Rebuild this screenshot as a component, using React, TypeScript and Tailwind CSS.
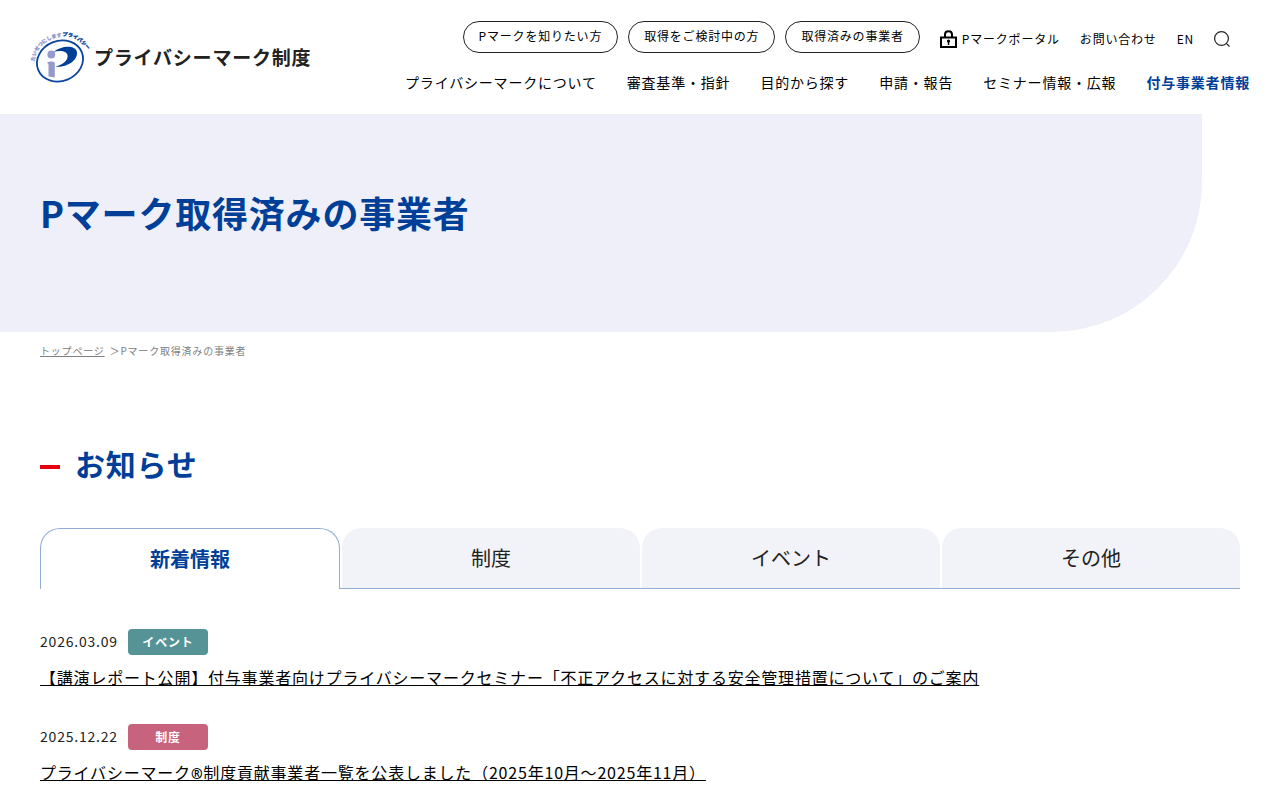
import { useState } from "react";

const audiences = ["Pマークを知りたい方", "取得をご検討中の方", "取得済みの事業者"];

const sections = [
  "プライバシーマークについて",
  "審査基準・指針",
  "目的から探す",
  "申請・報告",
  "セミナー情報・広報",
  "付与事業者情報",
];

const tabs = ["新着情報", "制度", "イベント", "その他"];

const news = [
  {
    date: "2026.03.09",
    category: "イベント",
    badge: "bg-[#569396]",
    title:
      "【講演レポート公開】付与事業者向けプライバシーマークセミナー「不正アクセスに対する安全管理措置について」のご案内",
  },
  {
    date: "2025.12.22",
    category: "制度",
    badge: "bg-[#c8637d]",
    title: (
      <>
        プライバシーマーク<span className="font-['Noto_Sans',sans-serif] text-sm font-bold">®</span>
        制度貢献事業者一覧を公表しました（2025年10月～2025年11月）
      </>
    ),
  },
];

function LogoMark() {
  return (
    <svg viewBox="0 0 60 54" className="h-[54px] w-[60px] shrink-0 overflow-visible tracking-normal" aria-hidden="true">
      <defs>
        <path id="arc-left" d="M4.500 31.500 C6 18 16 8 33 6.500" />
        <path id="arc-right" d="M32.500 6 C43 6 51 11 58.500 21" />
      </defs>
      <text fill="#8b93cb" fontSize="5" fontWeight="900" stroke="#8b93cb" strokeWidth="0.200">
        <textPath href="#arc-left">たいせつにします</textPath>
      </text>
      <text fill="#003f98" fontSize="5" fontWeight="900" stroke="#003f98" strokeWidth="0.300">
        <textPath href="#arc-right">プライバシー</textPath>
      </text>
      <ellipse cx="30" cy="31" rx="23.500" ry="20" transform="rotate(-22 30 31)" fill="none" stroke="#0b459f" strokeWidth="1.800" />
      <path
        d="M23.500 22 C31 15 46.500 14.500 47 22.500 C47.500 31.500 35 38 25.500 36.500 C33 35 38.500 30 37.500 25 C36.500 20.500 29 20 23.500 22Z"
        fill="#003f98"
      />
      <circle cx="21.300" cy="24.500" r="3.900" fill="#949acd" />
      <path d="M17 32.500 C19.500 31 23 31 24.800 32.500 V47.500 L18.500 46.500 V35 C18.500 34 18 33.500 17 32.500Z" fill="#949acd" />
    </svg>
  );
}

function LockIcon() {
  return (
    <svg viewBox="0 0 18 18" className="h-[18px] w-[18px]" fill="none" stroke="#000" aria-hidden="true">
      <rect x="1" y="7.500" width="15" height="9.500" strokeWidth="2" />
      <path d="M5 7.500 V4.500 C5 0 12 0 12 4.500 V7.500" strokeWidth="2" />
      <circle cx="8.500" cy="11" r="1.600" fill="#000" stroke="none" />
      <path d="M8.500 11 V15" strokeWidth="1.400" />
    </svg>
  );
}

function SearchIcon() {
  return (
    <svg viewBox="0 0 16 16" className="h-4 w-4" fill="none" stroke="#222" strokeWidth="1.200" aria-hidden="true">
      <circle cx="7.500" cy="7.500" r="6.900" />
      <path d="M12.300 12.300 L15.500 15.500" />
    </svg>
  );
}

export default function App() {
  const [active, setActive] = useState(0);

  return (
    <div className="bg-white font-['Noto_Sans_CJK_JP',sans-serif] text-base tracking-wider text-[#222]">
      <header className="flex items-start justify-between px-[30px] pb-5 pt-[21px]">
        <a href="#" className="mt-[9px] flex items-center gap-1 whitespace-nowrap text-[19px] font-bold">
          <LogoMark />
          プライバシーマーク制度
        </a>
        <div className="flex flex-col items-end gap-[17px] whitespace-nowrap text-black">
          <div className="flex items-center pr-5 text-xs">
            <ul className="flex gap-[10px]">
              {audiences.map((label) => (
                <li key={label}>
                  <a href="#" className="flex h-8 items-center rounded-full border border-[#222] px-[15px] pb-[2px]">
                    {label}
                  </a>
                </li>
              ))}
            </ul>
            <ul className="ml-5 flex items-center gap-5 pt-1">
              <li>
                <a href="#" className="flex items-center gap-1">
                  <LockIcon />
                  Pマークポータル
                </a>
              </li>
              <li><a href="#">お問い合わせ</a></li>
              <li><a href="#">EN</a></li>
              <li>
                <button type="button" aria-label="検索" className="block">
                  <SearchIcon />
                </button>
              </li>
            </ul>
          </div>
          <nav>
            <ul className="flex gap-[30px] text-sm leading-6">
              {sections.map((label, i) => (
                <li key={label}>
                  <a href="#" className={i === 5 ? "font-bold text-[#003f98]" : ""}>{label}</a>
                </li>
              ))}
            </ul>
          </nav>
        </div>
      </header>

      <div className="mr-[78px] rounded-br-[150px] bg-[#eeeff8] px-10 pb-[92px] pt-[70px]">
        <h1 className="text-4xl font-bold leading-[56px] text-[#003f98]">Pマーク取得済みの事業者</h1>
      </div>

      <nav className="flex gap-[5px] px-10 pt-[11px] text-[10px] leading-4 text-[#808080]">
        <a href="#" className="underline">トップページ</a>
        <span>＞Pマーク取得済みの事業者</span>
      </nav>

      <main className="px-10 pt-[82px]">
        <h2 className="flex items-start gap-[15px] text-3xl font-bold leading-[44px] text-[#003f98]">
          <span className="mt-6 h-1 w-5 bg-[#e60012]" />
          お知らせ
        </h2>

        <div role="tablist" className="mt-[43px] grid grid-cols-4 text-xl tracking-normal">
          {tabs.map((label, i) => (
            <div key={label} className={i === 0 ? "flex" : "flex border-b border-[#91afd3] pl-[2px]"}>
              <button
                type="button"
                role="tab"
                aria-selected={active === i}
                onClick={() => setActive(i)}
                className={
                  active === i
                    ? "h-[61px] flex-1 rounded-t-[20px] border border-b-0 border-[#91afd3] bg-white font-bold text-[#003f98]"
                    : "h-[60px] flex-1 rounded-t-[20px] bg-[#f2f3f9]"
                }
              >
                {label}
              </button>
            </div>
          ))}
        </div>

        <ul className="flex flex-col gap-[33px] pt-10">
          {news.map((item) => (
            <li key={item.date}>
              <div className="flex items-center gap-[10px]">
                <time className="pb-[2px] text-sm">{item.date}</time>
                <span className={`flex h-[26px] w-20 items-center justify-center rounded-sm text-xs font-bold text-white ${item.badge}`}>
                  {item.category}
                </span>
              </div>
              <a href="#" className="mt-[9px] block pb-px leading-[26px] text-black underline">{item.title}</a>
            </li>
          ))}
        </ul>
      </main>
    </div>
  );
}
